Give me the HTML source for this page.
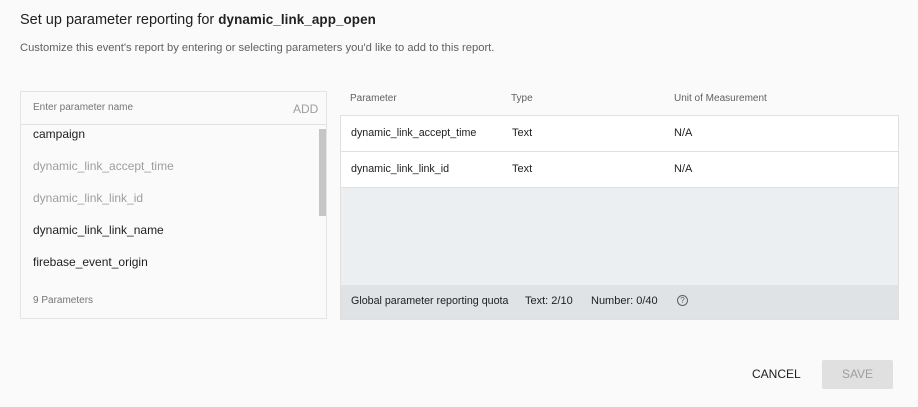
<!DOCTYPE html>
<html><head><style>
*{margin:0;padding:0;box-sizing:border-box}
body{width:918px;height:407px;background:#fafafa;font-family:"Liberation Sans",Arial,sans-serif;position:relative;overflow:hidden;color:#212121}
.a{position:absolute;white-space:nowrap}
</style></head><body>
<div class="a" style="left:20px;top:12px;font-size:14.5px;color:#212121">Set up parameter reporting for <b style="font-size:13.4px;letter-spacing:0.1px">dynamic_link_app_open</b></div>
<div class="a" style="left:20px;top:42px;font-size:11.2px;color:#616161">Customize this event's report by entering or selecting parameters you'd like to add to this report.</div>

<div class="a" style="left:20px;top:91px;width:307px;height:228px;border:1px solid #e4e4e4;background:#fafafa">
  <div class="a" style="left:0;top:0;width:305px;height:33px;border-bottom:1px solid #e0e0e0"></div>
  <div class="a" style="left:12px;top:10px;font-size:10px;color:#757575">Enter parameter name</div>
  <div class="a" style="left:272px;top:10px;font-size:12px;color:#9e9e9e">ADD</div>
  <div class="a" style="left:12px;top:35px;font-size:12px;color:#212121">campaign</div>
  <div class="a" style="left:12px;top:67px;font-size:12px;color:#9e9e9e">dynamic_link_accept_time</div>
  <div class="a" style="left:12px;top:99px;font-size:12px;color:#9e9e9e">dynamic_link_link_id</div>
  <div class="a" style="left:12px;top:131px;font-size:12px;color:#212121">dynamic_link_link_name</div>
  <div class="a" style="left:12px;top:163px;font-size:12px;color:#212121">firebase_event_origin</div>
  <div class="a" style="left:298px;top:37px;width:7px;height:87px;background:#c6c6c6"></div>
  <div class="a" style="left:12px;top:203px;font-size:10px;color:#757575">9 Parameters</div>
</div>

<div class="a" style="left:350px;top:93px;font-size:10px;color:#616161">Parameter</div>
<div class="a" style="left:511px;top:93px;font-size:10px;color:#616161">Type</div>
<div class="a" style="left:674px;top:93px;font-size:10px;color:#616161">Unit of Measurement</div>

<div class="a" style="left:340px;top:115px;width:559px;height:205px;border:1px solid #e0e0e0;background:#eceff1">
  <div class="a" style="left:0;top:0;width:557px;height:36px;background:#fff;border-bottom:1px solid #e0e0e0"></div>
  <div class="a" style="left:0;top:36px;width:557px;height:36px;background:#fff;border-bottom:1px solid #e0e0e0"></div>
  <div class="a" style="left:10px;top:11px;font-size:10.7px">dynamic_link_accept_time</div>
  <div class="a" style="left:171px;top:11px;font-size:11px">Text</div>
  <div class="a" style="left:333px;top:11px;font-size:11px">N/A</div>
  <div class="a" style="left:10px;top:47px;font-size:10.7px">dynamic_link_link_id</div>
  <div class="a" style="left:171px;top:47px;font-size:11px">Text</div>
  <div class="a" style="left:333px;top:47px;font-size:11px">N/A</div>
  <div class="a" style="left:0;top:169px;width:557px;height:34px;background:#dfe3e5"></div>
  <div class="a" style="left:10px;top:179px;font-size:10.7px">Global parameter reporting quota</div>
  <div class="a" style="left:184px;top:179px;font-size:11px">Text: 2/10</div>
  <div class="a" style="left:250px;top:179px;font-size:11px">Number: 0/40</div>
  <div class="a" style="left:336px;top:179px;width:11px;height:11px;border:1px solid #616161;border-radius:50%;font-size:8px;line-height:9px;text-align:center;color:#616161">?</div>
</div>

<div class="a" style="left:752px;top:367px;font-size:12px;color:#212121">CANCEL</div>
<div class="a" style="left:822px;top:360px;width:71px;height:29px;background:#e0e0e0;border-radius:2px;font-size:12px;color:#9e9e9e;text-align:center;line-height:29px">SAVE</div>
</body></html>
